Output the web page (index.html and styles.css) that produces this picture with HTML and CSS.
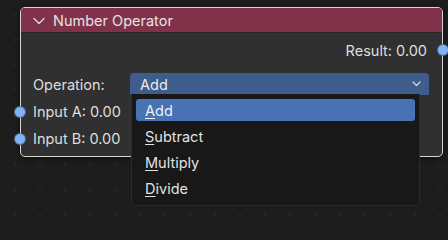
FILE: index.html
```html
<!DOCTYPE html>
<html>
<head>
<meta charset="utf-8">
<link rel="stylesheet" href="styles.css">
</head>
<body>
<div class="editor">
  <div class="node">
    <div class="node-header">
      <svg class="collapse" width="12" height="8" viewBox="0 0 12 8"><path d="M1 1.5 L6 6.5 L11 1.5" fill="none" stroke="#dcdcdc" stroke-width="1.3" stroke-linecap="round" stroke-linejoin="round"/></svg>
      <span class="node-title">Number Operator</span>
    </div>
    <div class="node-body">
      <div class="row row-output">
        <span class="label">Result: 0.00</span>
        <span class="socket socket-out"></span>
      </div>
      <div class="row row-prop">
        <span class="prop-label">Operation:</span>
        <div class="select">
          <span>Add</span>
          <svg width="9" height="6" viewBox="0 0 9 6"><path d="M1 1 L4.5 4.5 L8 1" fill="none" stroke="#d8d8d8" stroke-width="1.2" stroke-linecap="round" stroke-linejoin="round"/></svg>
        </div>
      </div>
      <div class="row row-input">
        <span class="socket socket-in"></span>
        <span class="label">Input A: 0.00</span>
      </div>
      <div class="row row-input">
        <span class="socket socket-in"></span>
        <span class="label">Input B: 0.00</span>
      </div>
    </div>
  </div>
  <div class="menu">
    <div class="menu-item active"><u>A</u>dd</div>
    <div class="menu-item"><u>S</u>ubtract</div>
    <div class="menu-item"><u>M</u>ultiply</div>
    <div class="menu-item"><u>D</u>ivide</div>
  </div>
</div>
</body>
</html>
```
FILE: styles.css
```css
* { box-sizing: border-box; }
html, body { margin: 0; padding: 0; background: #1d1d1d; }
body {
  width: 448px;
  height: 216px;
  overflow: hidden;
  font-family: Inter, "DejaVu Sans", sans-serif;
  font-size: 14.5px;
  color: #dedede;
}
.editor {
  position: relative;
  width: 448px;
  height: 216px;
  background-color: #1d1d1d;
  background-image: radial-gradient(circle, #2b2b2b 0.9px, transparent 1.3px);
  background-size: 25px 25px;
  background-position: 2.5px 2.5px;
}
.node {
  position: absolute;
  left: 20px;
  top: 7px;
  width: 423px;
  height: 150px;
  border: 1px solid #d6d6d6;
  border-radius: 5px;
  background: #303030;
  box-shadow: 0 2px 6px rgba(0,0,0,0.45);
}
.node-header {
  height: 25px;
  display: flex;
  align-items: center;
  gap: 8px;
  padding-left: 12px;
  background: #82314a;
  border-radius: 4px 4px 0 0;
  border-bottom: 1px solid #262626;
  color: #e4e4e4;
}
.collapse { flex: none; margin-top: 1px; }
.node-body {
  display: flex;
  flex-direction: column;
  padding-top: 5px;
}
.row {
  position: relative;
  display: flex;
  align-items: center;
  padding: 0 13px 0 12px;
}
.row-output {
  height: 24px;
  justify-content: flex-end;
  padding-right: 15px;
}
.row-prop {
  height: 22px;
  margin-top: 11px;
  margin-bottom: 3px;
}
.row-input { height: 27px; }
.prop-label { width: 97px; flex: none; }
.select {
  flex: 1;
  height: 22px;
  display: flex;
  align-items: center;
  justify-content: space-between;
  padding: 0 8px 0 10px;
  background: #3e5c8c;
  border-radius: 4px 4px 0 0;
  color: #ececec;
}
.socket {
  position: absolute;
  top: 50%;
  width: 12px;
  height: 12px;
  margin-top: -6px;
  border-radius: 50%;
  background: #80b3f5;
  border: 1px solid rgba(20,30,45,0.45);
}
.socket-in { left: -7px; }
.socket-out { right: -7px; }
.menu {
  position: absolute;
  left: 131px;
  top: 94px;
  width: 289px;
  height: 112px;
  background: #181818;
  border: 1px solid #2a2a2a;
  border-top: none;
  border-radius: 0 0 5px 5px;
  padding: 5px 4px 0 4px;
  display: flex;
  flex-direction: column;
  gap: 4px;
}
.menu-item {
  height: 22px;
  display: flex;
  align-items: center;
  padding-left: 9px;
  border-radius: 3px;
  color: #e2e2e2;
}
.menu-item.active { background: #4772b3; color: #f2f2f2; }
.menu-item u { text-underline-offset: 2px; text-decoration-thickness: 1px; }
```
